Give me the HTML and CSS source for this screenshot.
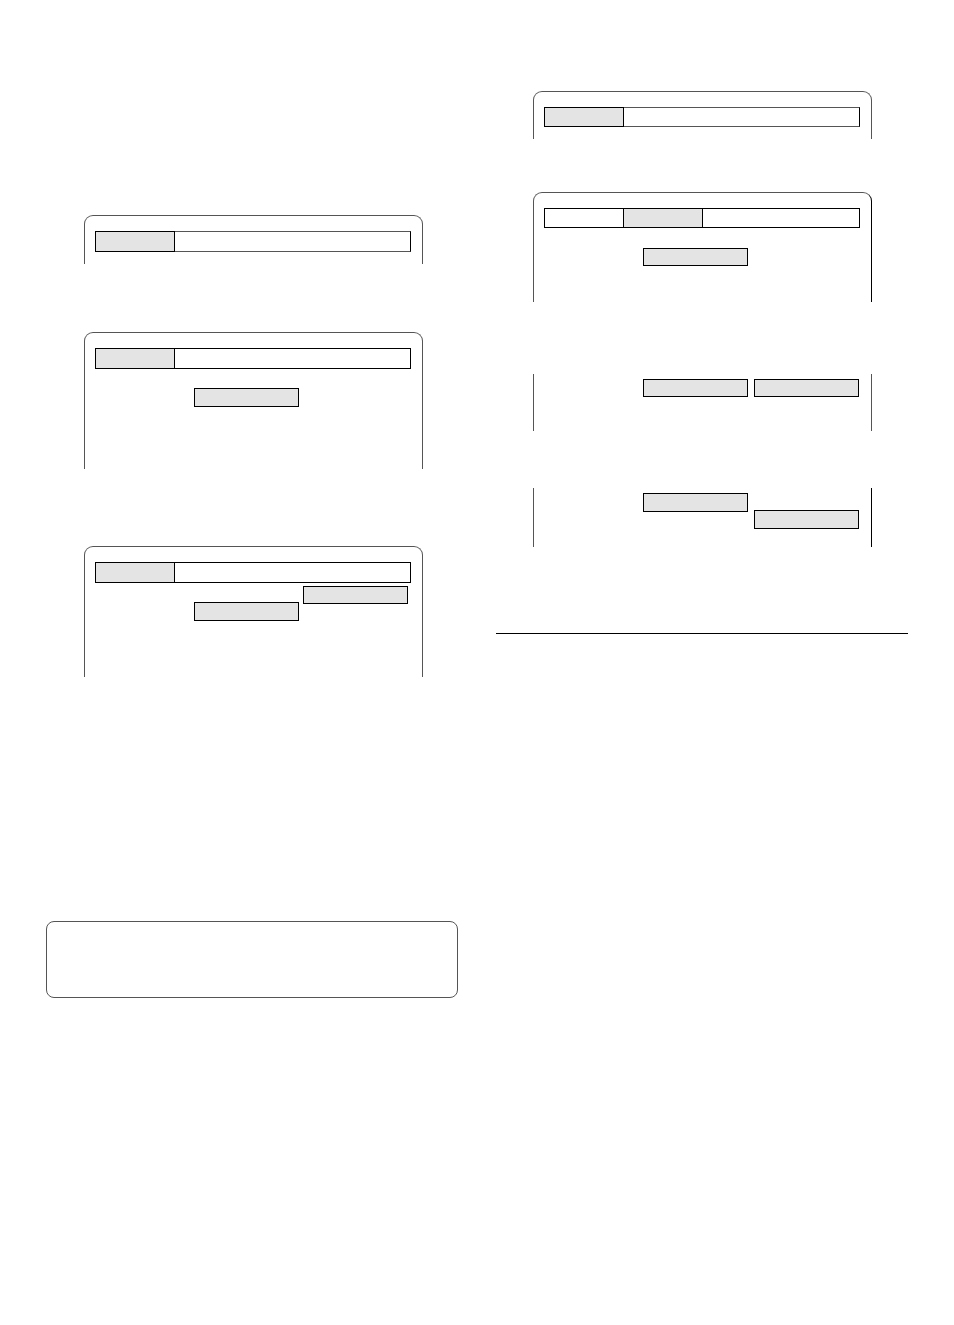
FILE: index.html
```html
<!DOCTYPE html>
<html lang="en">
<head>
    <meta charset="UTF-8">
    <meta name="viewport" content="width=device-width, initial-scale=1.0">
    <title>Menu panels</title>
    <link rel="stylesheet" href="styles.css">
</head>
<body>
    <main class="page">
        <section class="column column-left">
            <div class="panel panel-short">
                <div class="menu-bar menu-bar-soft">
                    <div class="menu-cell active"></div>
                </div>
            </div>
            <div class="panel panel-tall">
                <div class="menu-bar">
                    <div class="menu-cell active"></div>
                </div>
                <div class="options">
                    <div class="option option-main option-high"></div>
                </div>
            </div>
            <div class="panel panel-medium">
                <div class="menu-bar">
                    <div class="menu-cell active"></div>
                </div>
                <div class="options options-raised">
                    <div class="option option-main option-high"></div>
                    <div class="option option-sub"></div>
                </div>
            </div>
            <div class="note"></div>
        </section>
        <section class="column column-right">
            <div class="panel panel-short">
                <div class="menu-bar menu-bar-soft">
                    <div class="menu-cell active"></div>
                </div>
            </div>
            <div class="panel panel-options">
                <div class="menu-bar">
                    <div class="menu-cell"></div>
                    <div class="menu-cell active"></div>
                </div>
                <div class="options">
                    <div class="option option-main"></div>
                </div>
            </div>
            <div class="panel panel-open panel-level">
                <div class="options">
                    <div class="option option-main"></div>
                    <div class="option option-sub"></div>
                </div>
            </div>
            <div class="panel panel-open panel-stepped">
                <div class="options options-lowered">
                    <div class="option option-main option-high"></div>
                    <div class="option option-sub option-high"></div>
                </div>
            </div>
            <hr class="divider">
        </section>
    </main>
</body>
</html>
```

FILE: styles.css
```css
* {
    margin: 0;
    padding: 0;
    box-sizing: border-box;
}
body {
    font-family: "Liberation Sans", Arial, sans-serif;
    background-color: #fff;
    color: #000;
}
.page {
    display: grid;
    grid-template-columns: 1fr 1fr;
    gap: 38px;
    min-height: 100vh;
    padding: 0 46px;
}
.column {
    display: flex;
    flex-direction: column;
}
.column-left {
    padding-top: 215px;
}
.column-right {
    padding-top: 91px;
}

/* Panels are open at the bottom */
.panel {
    margin: 0 36px 0 37px;
    padding: 15px 11px 0 10px;
    border: 1px solid #555;
    border-bottom: none;
    border-radius: 9px 9px 0 0;
}
.column-left .panel {
    margin-left: 38px;
    margin-right: 35px;
}
.panel-short {
    min-height: 49px;
}
.column-left .panel-tall {
    min-height: 137px;
    margin-top: 68px;
}
.column-left .panel-medium {
    min-height: 131px;
    margin-top: 77px;
}
.column-right .panel-short {
    min-height: 48px;
}
.panel-options {
    min-height: 110px;
    margin-top: 53px;
}
.panel-open {
    padding-top: 5px;
    border-top: none;
    border-radius: 0;
}
.panel-level {
    min-height: 57px;
    margin-top: 72px;
}
.panel-stepped {
    min-height: 59px;
    margin-top: 57px;
}
.panel-options,
.panel-stepped {
    border-right-color: #000;
}

.menu-bar {
    display: grid;
    grid-template-columns: 79fr 79fr 156fr;
    height: 21px;
    border: 1px solid #000;
}
.column-right .menu-bar {
    height: 20px;
}
.menu-bar-soft {
    border-top-color: #555;
    border-bottom-color: #555;
}
.menu-cell.active {
    margin: -1px 0 -1px -1px;
    border: 1px solid #000;
    background-color: #e4e4e4;
}

.options {
    display: grid;
    grid-template-columns: 99fr 105fr 4fr 105fr 3fr;
    align-items: start;
    margin-top: 19px;
}
.column-right .options {
    grid-template-columns: 99fr 105fr 6fr 105fr 1fr;
    margin-top: 20px;
}
.option {
    grid-row: 1;
    height: 18px;
    border: 1px solid #000;
    background-color: #e4e4e4;
}
.option-high {
    height: 19px;
}
.option-main {
    grid-column: 2;
}
.option-sub {
    grid-column: 4;
}
.column-left .options-raised {
    margin-top: 3px;
}
.options-raised .option-main {
    margin-top: 16px;
}
.column-right .panel-open .options {
    margin-top: 0;
}
.options-lowered .option-sub {
    margin-top: 17px;
}

.note {
    min-height: 77px;
    margin-top: 244px;
    border: 1px solid #555;
    border-radius: 8px;
}
.divider {
    margin-top: 86px;
    border: none;
    border-top: 1px solid #000;
}
```
